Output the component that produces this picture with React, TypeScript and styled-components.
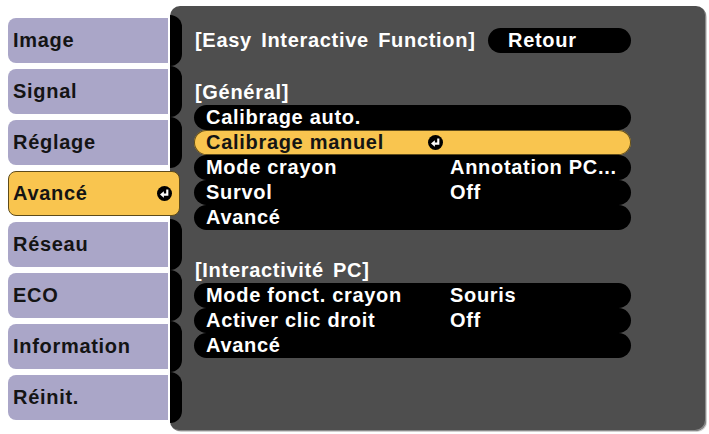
import React from "react";
import styled, { createGlobalStyle } from "styled-components";

const GlobalStyle = createGlobalStyle`
  html, body {
    margin: 0;
    padding: 0;
    background: #ffffff;
  }
  body {
    font-family: "Liberation Sans", Arial, sans-serif;
  }
`;

const Screen = styled.div`
  display: flex;
  align-items: flex-start;
  width: 709px;
  height: 434px;
  padding-left: 8px;
  box-sizing: border-box;
  font-size: 20px;
  font-weight: 700;
  letter-spacing: 0.7px;
`;

const TabList = styled.nav`
  position: relative;
  z-index: 1;
  display: flex;
  flex-direction: column;
  width: 174px;
  margin-top: 15px;
`;

const TabRow = styled.div`
  display: flex;
  align-items: stretch;
  height: 51px;
`;

const TabFace = styled.div<{ $active?: boolean }>`
  display: flex;
  align-items: center;
  justify-content: space-between;
  box-sizing: border-box;
  height: 45px;
  margin: 3px 0;
  width: ${(p) => (p.$active ? "172px" : "160px")};
  padding: 0 ${(p) => (p.$active ? "7px" : "0")} 0 ${(p) => (p.$active ? "4px" : "5px")};
  background: ${(p) => (p.$active ? "#f9c54f" : "#aaa6c8")};
  border: ${(p) => (p.$active ? "1px solid #5e4b1a" : "none")};
  border-radius: ${(p) => (p.$active ? "8px" : "8px 0 0 8px")};
  color: #141414;
  line-height: 45px;
`;

const Connector = styled.div`
  width: 12px;
  margin-left: 2px;
  background: #000000;
  border-radius: 0 12px 12px 0;
`;

const Panel = styled.main`
  position: relative;
  z-index: 0;
  box-sizing: border-box;
  width: 536px;
  height: 425px;
  margin-top: 6px;
  margin-left: -12px;
  padding: 22px 75px 0 24px;
  background: #4e4e4e;
  border-radius: 10px;
  box-shadow: inset -1px -1px 0 #8a8a8a, 1px 1px 0 #cfcfcf;
  color: #ffffff;
`;

const Header = styled.div`
  display: flex;
  align-items: center;
  justify-content: space-between;
  height: 25px;
`;

const Title = styled.span`
  padding-left: 1px;
  line-height: 25px;
  word-spacing: 3px;
`;

const BackButton = styled.div`
  box-sizing: border-box;
  width: 143px;
  height: 25px;
  padding-left: 20px;
  background: #000000;
  border-radius: 13px;
  line-height: 25px;
`;

const Group = styled.section<{ $gap: number }>`
  margin-top: ${(p) => p.$gap}px;
`;

const GroupLabel = styled.div`
  height: 25px;
  padding-left: 1px;
  line-height: 25px;
  word-spacing: 3px;
`;

const Row = styled.div<{ $active?: boolean }>`
  display: grid;
  grid-template-columns: 244px 1fr;
  box-sizing: border-box;
  height: 25px;
  padding-left: 12px;
  background: ${(p) => (p.$active ? "#f9c54f" : "#000000")};
  box-shadow: ${(p) => (p.$active ? "inset 0 0 0 1px #5e4b1a" : "none")};
  border-radius: 13px;
  color: ${(p) => (p.$active ? "#141414" : "#ffffff")};
  line-height: 25px;
  white-space: nowrap;
`;

const LabelCell = styled.span`
  display: flex;
  align-items: center;
  justify-content: space-between;
  padding-right: 7px;
`;

const ValueCell = styled.span``;

const EnterIcon: React.FC = () => (
  <svg width="15" height="15" viewBox="0 0 14 14">
    <circle cx="7" cy="7" r="7" fill="#000" />
    <path d="M9.6 3.2 V8 H6" stroke="#fff" strokeWidth="2" fill="none" />
    <polygon points="2.8,8 6.4,5 6.4,11" fill="#fff" />
  </svg>
);

const tabs = [
  "Image",
  "Signal",
  "Réglage",
  "Avancé",
  "Réseau",
  "ECO",
  "Information",
  "Réinit.",
];

type Item = { label: string; value?: string; active?: boolean };

const general: Item[] = [
  { label: "Calibrage auto." },
  { label: "Calibrage manuel", active: true },
  { label: "Mode crayon", value: "Annotation PC..." },
  { label: "Survol", value: "Off" },
  { label: "Avancé" },
];

const pc: Item[] = [
  { label: "Mode fonct. crayon", value: "Souris" },
  { label: "Activer clic droit", value: "Off" },
  { label: "Avancé" },
];

const Rows: React.FC<{ items: Item[] }> = ({ items }) => (
  <>
    {items.map((it) => (
      <Row key={it.label} $active={it.active}>
        <LabelCell>
          {it.label}
          {it.active && <EnterIcon />}
        </LabelCell>
        <ValueCell>{it.value}</ValueCell>
      </Row>
    ))}
  </>
);

export default function App() {
  return (
    <>
      <GlobalStyle />
      <Screen>
        <TabList>
          {tabs.map((t) => {
            const active = t === "Avancé";
            return (
              <TabRow key={t}>
                <TabFace $active={active}>
                  {t}
                  {active && <EnterIcon />}
                </TabFace>
                {!active && <Connector />}
              </TabRow>
            );
          })}
        </TabList>
        <Panel>
          <Header>
            <Title>[Easy Interactive Function]</Title>
            <BackButton>Retour</BackButton>
          </Header>
          <Group $gap={27}>
            <GroupLabel>[Général]</GroupLabel>
            <Rows items={general} />
          </Group>
          <Group $gap={28}>
            <GroupLabel>[Interactivité PC]</GroupLabel>
            <Rows items={pc} />
          </Group>
        </Panel>
      </Screen>
    </>
  );
}
